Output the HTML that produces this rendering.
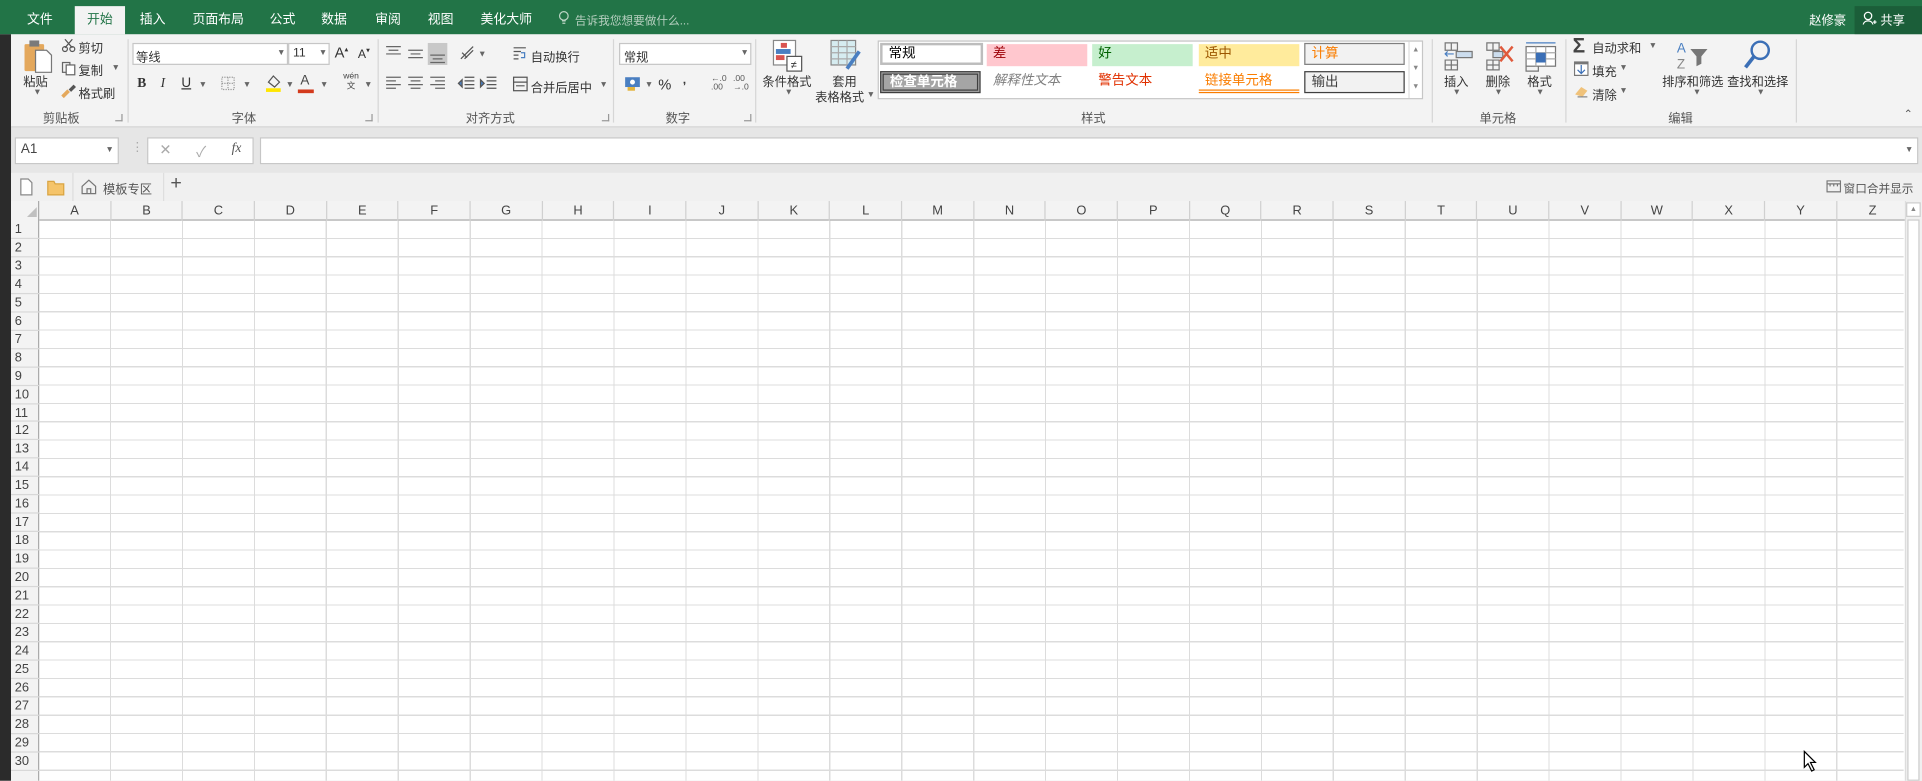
<!DOCTYPE html>
<html><head><meta charset="utf-8">
<style>
*{margin:0;padding:0;box-sizing:border-box}
html,body{width:1922px;height:781px;overflow:hidden;background:#e6e6e6}
body{font-family:"Liberation Sans","Noto Sans CJK SC",sans-serif;color:#333}
#w{position:absolute;left:0;top:0;width:1568px;height:637px;transform:scale(1.22577);transform-origin:0 0;overflow:hidden;background:#e6e6e6}
.a{position:absolute;white-space:nowrap}
.t{font-size:10.5px;color:#fff;top:8px}
.g{font-size:10px;color:#555;top:88px}
.l{font-size:10px;color:#333}
.sep{position:absolute;top:32px;width:1px;height:68px;background:#d6d6d6}
.box{position:absolute;background:#fff;border:1px solid #c6c6c6}
.dd{font-size:7px;color:#666}
.st{position:absolute;height:18px;font-size:11px;line-height:17px;padding-left:5px}
.corner{position:absolute;width:6px;height:6px;border-right:1px solid #999;border-bottom:1px solid #999}
</style></head><body><div id="w">
<div class="a" style="left:0;top:0;width:1568px;height:28px;background:#227447"></div>
<div class="a" style="left:61px;top:5px;width:41px;height:23px;background:#f3f3f3"></div>
<div class="a t" style="left:22px">文件</div>
<div class="a t" style="left:71px;color:#227447">开始</div>
<div class="a t" style="left:114px">插入</div>
<div class="a t" style="left:157px">页面布局</div>
<div class="a t" style="left:220px">公式</div>
<div class="a t" style="left:262px">数据</div>
<div class="a t" style="left:306px">审阅</div>
<div class="a t" style="left:349px">视图</div>
<div class="a t" style="left:392px">美化大师</div>
<svg class="a" style="left:455px;top:8px" width="10" height="14"><circle cx="5" cy="5" r="3.5" fill="none" stroke="#bcd5c5" stroke-width="1"/><path d="M3.5 9h3M3.8 11h2.4" stroke="#bcd5c5"/></svg>
<div class="a t" style="left:469px;color:#b5cfbf;font-size:9.5px;top:9px">告诉我您想要做什么...</div>
<div class="a t" style="left:1476px;font-size:10px">赵修豪</div>
<div class="a" style="left:1513px;top:5px;width:55px;height:23px;background:#1b5e39"></div>
<svg class="a" style="left:1519px;top:9px" width="12" height="12"><circle cx="5" cy="4" r="3" fill="none" stroke="#fff"/><path d="M1 11c1-4 7-4 8 0M9 9h3M10.5 7.5v3" stroke="#fff" fill="none"/></svg>
<div class="a t" style="left:1534px;font-size:10px">共享</div>

<div class="a" style="left:0;top:28px;width:9px;height:609px;background:#2b2b2b"></div>
<div class="a" style="left:9px;top:28px;width:1559px;height:76px;background:#f3f3f3;border-bottom:1px solid #d5d5d5"></div>
<svg class="a" style="left:18px;top:31px" width="26" height="30"><rect x="2" y="5" width="16" height="22" rx="1" fill="#e4a85c"/><rect x="6" y="2" width="8" height="5" fill="#7a7a7a"/><path d="M11 10h9l4 4v14H11z" fill="#fff" stroke="#777"/></svg>
<div class="a l" style="left:19px;top:58px">粘贴</div>
<div class="a dd" style="left:27px;top:72px">▼</div>
<svg class="a" style="left:50px;top:31px" width="12" height="12"><circle cx="3" cy="9" r="2" fill="none" stroke="#555"/><circle cx="9" cy="9" r="2" fill="none" stroke="#555"/><path d="M3 1l6 7M9 1L3 8" stroke="#555"/></svg>
<div class="a l" style="left:64px;top:31px">剪切</div>
<svg class="a" style="left:50px;top:50px" width="12" height="12"><rect x="1" y="1" width="6" height="8" fill="none" stroke="#666"/><rect x="4" y="3" width="7" height="8" fill="#fff" stroke="#666"/></svg>
<div class="a l" style="left:64px;top:49px">复制</div><div class="a dd" style="left:91px;top:52px">▼</div>
<svg class="a" style="left:50px;top:68px" width="12" height="12"><path d="M1 11l5-5" stroke="#e4a85c" stroke-width="3"/><path d="M6 5l4-4 2 2-4 4z" fill="#555"/></svg>
<div class="a l" style="left:64px;top:68px">格式刷</div>
<div class="a g" style="left:35px">剪贴板</div><div class="corner" style="left:94px;top:93px"></div>
<div class="sep" style="left:104px"></div>
<div class="box" style="left:108px;top:35px;width:127px;height:18px"></div>
<div class="a l" style="left:111px;top:38px">等线</div><div class="a dd" style="left:226px;top:40px">▼</div>
<div class="box" style="left:235px;top:35px;width:34px;height:18px"></div>
<div class="a l" style="left:239px;top:38px">11</div><div class="a dd" style="left:260px;top:40px">▼</div>
<div class="a l" style="left:273px;top:36px;font-size:12px">A<sup style="font-size:6px">▴</sup></div>
<div class="a l" style="left:292px;top:38px;font-size:10px">A<sup style="font-size:6px">▾</sup></div>
<div class="a l" style="left:112px;top:62px;font-weight:bold;font-family:'Liberation Serif',serif;font-size:11px">B</div>
<div class="a l" style="left:131px;top:62px;font-style:italic;font-family:'Liberation Serif',serif;font-size:11px">I</div>
<div class="a l" style="left:148px;top:62px;text-decoration:underline;font-size:11px">U</div><div class="a dd" style="left:162px;top:66px">▼</div>
<svg class="a" style="left:180px;top:62px" width="12" height="12"><rect x="1" y="1" width="10" height="10" fill="none" stroke="#999" stroke-dasharray="1 1"/><path d="M6 1v10M1 6h10" stroke="#999" stroke-dasharray="1 1"/></svg><div class="a dd" style="left:198px;top:66px">▼</div>
<svg class="a" style="left:216px;top:60px" width="14" height="16"><path d="M3 7l4-5 5 5-4 4z" fill="none" stroke="#555"/><rect x="1" y="12" width="12" height="3" fill="#ffe600"/></svg><div class="a dd" style="left:233px;top:66px">▼</div>
<div class="a l" style="left:245px;top:60px;font-size:11px;color:#444">A</div><div class="a" style="left:243px;top:73px;width:13px;height:3px;background:#d33a1c"></div><div class="a dd" style="left:261px;top:66px">▼</div>
<div class="a" style="left:280px;top:59px;font-size:7px;color:#444;line-height:8px;text-align:center">wén<br>文</div><div class="a dd" style="left:297px;top:66px">▼</div>
<div class="a g" style="left:189px">字体</div><div class="corner" style="left:298px;top:93px"></div>
<div class="sep" style="left:308px"></div>
<svg class="a" style="left:313px;top:35px" width="52" height="18"><rect x="36" y="0" width="16" height="18" fill="#c8c8c8"/><path d="M2 3h12M4 6h8M2 9h12M20 6h12M22 9h8M20 12h12M38 10h12M40 13h8M38 16h12" stroke="#666"/></svg>
<svg class="a" style="left:374px;top:36px" width="14" height="14"><path d="M2 12L12 2M5 12l7-7M3 7l4 4" stroke="#555" fill="none"/></svg><div class="a dd" style="left:390px;top:41px">▼</div>
<svg class="a" style="left:418px;top:37px" width="12" height="12"><path d="M1 2h10M1 5h6M1 8h4M1 11h4" stroke="#555"/><path d="M7 6h3v4H7" stroke="#4a7fc1" fill="none"/></svg>
<div class="a l" style="left:433px;top:38px">自动换行</div>
<svg class="a" style="left:313px;top:62px" width="52" height="12"><path d="M2 1h12M2 4h8M2 7h12M2 10h8M20 1h12M22 4h8M20 7h12M22 10h8M38 1h12M42 4h8M38 7h12M42 10h8" stroke="#666"/></svg>
<svg class="a" style="left:373px;top:62px" width="36" height="12"><path d="M6 1h8M6 4h8M6 7h8M6 10h8M1 6l3-3v6zM24 1h8M24 4h8M24 7h8M24 10h8M19 3l3 3-3 3z" stroke="#555" fill="#4a7fc1"/></svg>
<svg class="a" style="left:418px;top:62px" width="13" height="13"><rect x="1" y="1" width="11" height="11" fill="none" stroke="#555"/><path d="M1 5h11M3 8h7" stroke="#555"/></svg>
<div class="a l" style="left:433px;top:63px">合并后居中</div><div class="a dd" style="left:489px;top:66px">▼</div>
<div class="a g" style="left:380px">对齐方式</div><div class="corner" style="left:491px;top:93px"></div>
<div class="sep" style="left:500px"></div>
<div class="box" style="left:505px;top:35px;width:108px;height:18px"></div>
<div class="a l" style="left:509px;top:38px">常规</div><div class="a dd" style="left:604px;top:40px">▼</div>
<svg class="a" style="left:509px;top:61px" width="14" height="14"><rect x="1" y="2" width="12" height="8" fill="#4a7fc1"/><circle cx="7" cy="6" r="2" fill="#fff"/><rect x="3" y="10" width="6" height="3" fill="#e4b43c"/></svg><div class="a dd" style="left:526px;top:66px">▼</div>
<div class="a l" style="left:537px;top:62px;font-size:12px">%</div>
<div class="a l" style="left:557px;top:60px;font-weight:bold">,</div>
<div class="a" style="left:580px;top:61px;font-size:7px;line-height:7px;color:#555">←.0<br>.00</div>
<div class="a" style="left:598px;top:61px;font-size:7px;line-height:7px;color:#555">.00<br>→.0</div>
<div class="a g" style="left:543px">数字</div><div class="corner" style="left:607px;top:93px"></div>
<div class="sep" style="left:616px"></div>
<svg class="a" style="left:630px;top:32px" width="26" height="28"><rect x="1" y="1" width="18" height="20" fill="#fff" stroke="#888"/><rect x="7" y="3" width="5" height="4" fill="#d9534f"/><rect x="3" y="8" width="12" height="4" fill="#4a7fc1"/><rect x="3" y="13" width="7" height="4" fill="#d9534f"/><rect x="12" y="14" width="12" height="12" fill="#fff" stroke="#555"/><text x="15" y="24" font-size="9" fill="#333">≠</text></svg>
<div class="a l" style="left:622px;top:58px">条件格式</div><div class="a dd" style="left:640px;top:72px">▼</div>
<svg class="a" style="left:677px;top:32px" width="26" height="28"><rect x="1" y="1" width="20" height="20" fill="#d6ecf0" stroke="#888"/><path d="M1 6h20M1 11h20M1 16h20M7 1v20M14 1v20" stroke="#aaa"/><path d="M14 24l10-14" stroke="#4a7fc1" stroke-width="3"/></svg>
<div class="a l" style="left:679px;top:58px">套用</div>
<div class="a l" style="left:665px;top:71px">表格格式</div><div class="a dd" style="left:707px;top:74px">▼</div>
<div class="a" style="left:716px;top:33px;width:445px;height:48px;background:#fff;border:1px solid #c6c6c6"></div>
<div class="st" style="left:718px;top:35px;width:84px;background:#fff;border:2px solid #bdbdbd;color:#000;line-height:14px">常规</div>
<div class="st" style="left:805px;top:36px;width:82px;background:#ffc7ce;color:#9c0006">差</div>
<div class="st" style="left:891px;top:36px;width:82px;background:#c6efce;color:#006100">好</div>
<div class="st" style="left:978px;top:36px;width:82px;background:#ffeb9c;color:#9c5700">适中</div>
<div class="st" style="left:1064px;top:35px;width:82px;background:#f2f2f2;border:1px solid #7f7f7f;color:#fa7d00">计算</div>
<div class="st" style="left:718px;top:58px;width:82px;background:#a5a5a5;border:3px double #3f3f3f;color:#fff;line-height:13px;font-weight:bold">检查单元格</div>
<div class="st" style="left:805px;top:58px;width:82px;color:#7f7f7f;font-style:italic">解释性文本</div>
<div class="st" style="left:891px;top:58px;width:82px;color:#e03000">警告文本</div>
<div class="st" style="left:978px;top:58px;width:82px;color:#fa7d00;border-bottom:3px double #fa7d00;line-height:16px">链接单元格</div>
<div class="st" style="left:1064px;top:58px;width:82px;background:#f2f2f2;border:1px solid #3f3f3f;color:#3f3f3f">输出</div>
<div class="a" style="left:1149px;top:34px;width:11px;height:46px;border-left:1px solid #ddd;font-size:6px;color:#888;text-align:center;line-height:15px">▲<br>▼<br>▼</div>
<div class="a g" style="left:882px">样式</div>
<div class="sep" style="left:1168px"></div>
<svg class="a" style="left:1176px;top:32px" width="26" height="26"><path d="M3 3h10v6H3zM8 3v6M3 17h10v8H3zM3 21h10M8 17v8" fill="none" stroke="#777"/><rect x="12" y="10" width="13" height="5" fill="#cde" stroke="#777"/><path d="M3 12h7M5 10l-2 2 2 2" stroke="#4a7fc1" fill="none"/></svg>
<div class="a l" style="left:1178px;top:58px">插入</div><div class="a dd" style="left:1185px;top:72px">▼</div>
<svg class="a" style="left:1210px;top:32px" width="26" height="26"><path d="M3 3h10v6H3zM8 3v6M3 17h10v8H3zM3 21h10M8 17v8" fill="none" stroke="#777"/><rect x="8" y="10" width="8" height="5" fill="#cde" stroke="#777"/><path d="M14 6l10 12M24 6L14 18" stroke="#e05a3c" stroke-width="2"/></svg>
<div class="a l" style="left:1212px;top:58px">删除</div><div class="a dd" style="left:1219px;top:72px">▼</div>
<svg class="a" style="left:1244px;top:32px" width="26" height="28"><path d="M1 3h24" stroke="#4a7fc1"/><rect x="1" y="6" width="24" height="16" fill="#fff" stroke="#777"/><path d="M1 11h24M1 16h24M9 6v16M17 6v16" stroke="#aaa"/><rect x="9" y="11" width="8" height="8" fill="#3b6fb6"/><path d="M1 22v4h10v-4" fill="none" stroke="#777"/></svg>
<div class="a l" style="left:1246px;top:58px">格式</div><div class="a dd" style="left:1253px;top:72px">▼</div>
<div class="a g" style="left:1207px">单元格</div>
<div class="sep" style="left:1277px"></div>
<div class="a" style="left:1283px;top:28px;font-size:17px;color:#444;font-weight:bold">Σ</div>
<div class="a l" style="left:1299px;top:31px">自动求和</div><div class="a dd" style="left:1345px;top:34px">▼</div>
<svg class="a" style="left:1284px;top:50px" width="12" height="12"><rect x="0.5" y="0.5" width="11" height="11" fill="#fff" stroke="#777"/><rect x="0.5" y="0.5" width="11" height="2" fill="#777"/><path d="M6 3v7M3 7l3 3 3-3" stroke="#3b6fb6" fill="none"/></svg>
<div class="a l" style="left:1299px;top:50px">填充</div><div class="a dd" style="left:1321px;top:52px">▼</div>
<svg class="a" style="left:1284px;top:68px" width="12" height="12"><path d="M1 9l5-6 5 3-4 5z" fill="#f0c27a"/><path d="M3 11h8" stroke="#888"/></svg>
<div class="a l" style="left:1299px;top:69px">清除</div><div class="a dd" style="left:1321px;top:71px">▼</div>
<svg class="a" style="left:1367px;top:32px" width="28" height="26"><text x="1" y="11" font-size="11" fill="#4a7fc1" font-family="Liberation Sans">A</text><text x="1" y="24" font-size="11" fill="#888" font-family="Liberation Sans">Z</text><path d="M12 8h14l-5 6v6l-4 2v-8z" fill="#777"/></svg>
<div class="a l" style="left:1356px;top:58px">排序和筛选</div><div class="a dd" style="left:1381px;top:72px">▼</div>
<svg class="a" style="left:1421px;top:31px" width="26" height="28"><circle cx="15" cy="10" r="7" fill="none" stroke="#3b6fb6" stroke-width="2"/><path d="M10 15L3 24" stroke="#3b6fb6" stroke-width="3"/></svg>
<div class="a l" style="left:1409px;top:58px">查找和选择</div><div class="a dd" style="left:1433px;top:72px">▼</div>
<div class="a g" style="left:1361px">编辑</div>
<div class="sep" style="left:1465px"></div>
<div class="a" style="left:1553px;top:88px;font-size:9px;color:#555">⌃</div>

<div class="box" style="left:12px;top:112px;width:85px;height:22px"></div>
<div class="a l" style="left:17px;top:116px;font-size:11px;color:#444">A1</div><div class="a dd" style="left:86px;top:119px">▼</div>
<div class="a" style="left:107px;top:115px;font-size:10px;color:#aaa">⋮</div>
<div class="box" style="left:120px;top:112px;width:87px;height:22px"></div>
<div class="a" style="left:130px;top:115px;font-size:12px;color:#aaa">✕</div>
<div class="a" style="left:160px;top:115px;font-size:12px;color:#aaa">✓</div>
<div class="a" style="left:189px;top:115px;font-size:11px;color:#555;font-style:italic;font-family:'Liberation Serif',serif">fx</div>
<div class="box" style="left:212px;top:112px;width:1353px;height:22px"></div>
<div class="a dd" style="left:1554px;top:119px">▼</div>

<div class="a" style="left:9px;top:141px;width:1559px;height:23px;background:#f0f0f0"></div>
<svg class="a" style="left:15px;top:145px" width="40" height="15"><path d="M2 1h6l3 3v10H2z" fill="#fff" stroke="#888"/><path d="M24 3h5l1 2h7v9H24z" fill="#f5c46a" stroke="#d9a441"/></svg>
<div class="a" style="left:59px;top:141px;width:75px;height:23px;border-left:1px solid #ddd;border-right:1px solid #ddd"></div>
<svg class="a" style="left:66px;top:146px" width="13" height="13"><path d="M1 6l5.5-5 5.5 5v6H1z M5 12V8h3v4" fill="none" stroke="#777"/></svg>
<div class="a l" style="left:84px;top:146px;color:#555;font-size:10px">模板专区</div>
<div class="a" style="left:139px;top:141px;font-size:16px;color:#555">+</div>
<svg class="a" style="left:1490px;top:147px" width="12" height="10"><rect x="0.5" y="0.5" width="11" height="9" fill="none" stroke="#777"/><path d="M0 3h12M3 3v2M6 3v2M9 3v2" stroke="#777"/></svg>
<div class="a" style="left:1504px;top:146px;font-size:9.5px;color:#555">窗口合并显示</div>

<div class="a" style="left:9px;top:164px;width:1546px;height:473px;background:#fff"></div>
<div class="a" style="left:32px;top:180px;width:1521px;height:457px;background-image:repeating-linear-gradient(to right,transparent 0,transparent 57.68px,#dcdcdc 57.68px,#dcdcdc 58.68px),repeating-linear-gradient(to bottom,transparent 0,transparent 13.96px,#dcdcdc 13.96px,#dcdcdc 14.96px)"></div>
<div class="a" style="left:9px;top:164px;width:1546px;height:16px;background:#f3f3f3;border-bottom:1px solid #ababab"></div>
<div class="a" style="left:9px;top:164px;width:23px;height:473px;background:#f3f3f3;border-right:1px solid #ababab"></div>
<svg class="a" style="left:21px;top:168px" width="10" height="10"><path d="M9 1v8H1z" fill="#c0c0c0"/></svg>
<div class="a" id="cols" style="left:32px;top:164px;height:16px;display:flex"></div>
<div class="a" id="rows" style="left:9px;top:180px;width:23px"></div>
<div class="a" style="left:1554px;top:164px;width:14px;height:473px;background:#f0f0f0;border-left:1px solid #ddd"></div>
<div class="a" style="left:1555px;top:165px;width:12px;height:12px;background:#fff;border:1px solid #ccc;font-size:6px;color:#888;text-align:center;line-height:10px">▲</div>
<div class="a" style="left:1556px;top:179px;width:10px;height:458px;background:#fff;border:1px solid #ccc"></div>
<svg class="a" style="left:1471px;top:612px" width="12" height="18"><path d="M1 1v13l3-3 3 6 2-1-3-6h4z" fill="#fff" stroke="#000"/></svg>
</div>
<script>
var c=document.getElementById('cols'),L="ABCDEFGHIJKLMNOPQRSTUVWXYZ",h="";
for(var i=0;i<26;i++)h+='<div style="width:58.68px;height:16px;border-right:1px solid #d0d0d0;text-align:center;font-size:10.5px;line-height:16px;color:#444">'+L[i]+'</div>';
c.innerHTML=h;
var r=document.getElementById('rows');h="";
for(var j=1;j<=30;j++)h+='<div style="height:14.96px;border-bottom:1px solid #d8d8d8;padding-left:3px;font-size:10.5px;line-height:14px;color:#444">'+j+'</div>';
r.innerHTML=h;
</script>
</body></html>
